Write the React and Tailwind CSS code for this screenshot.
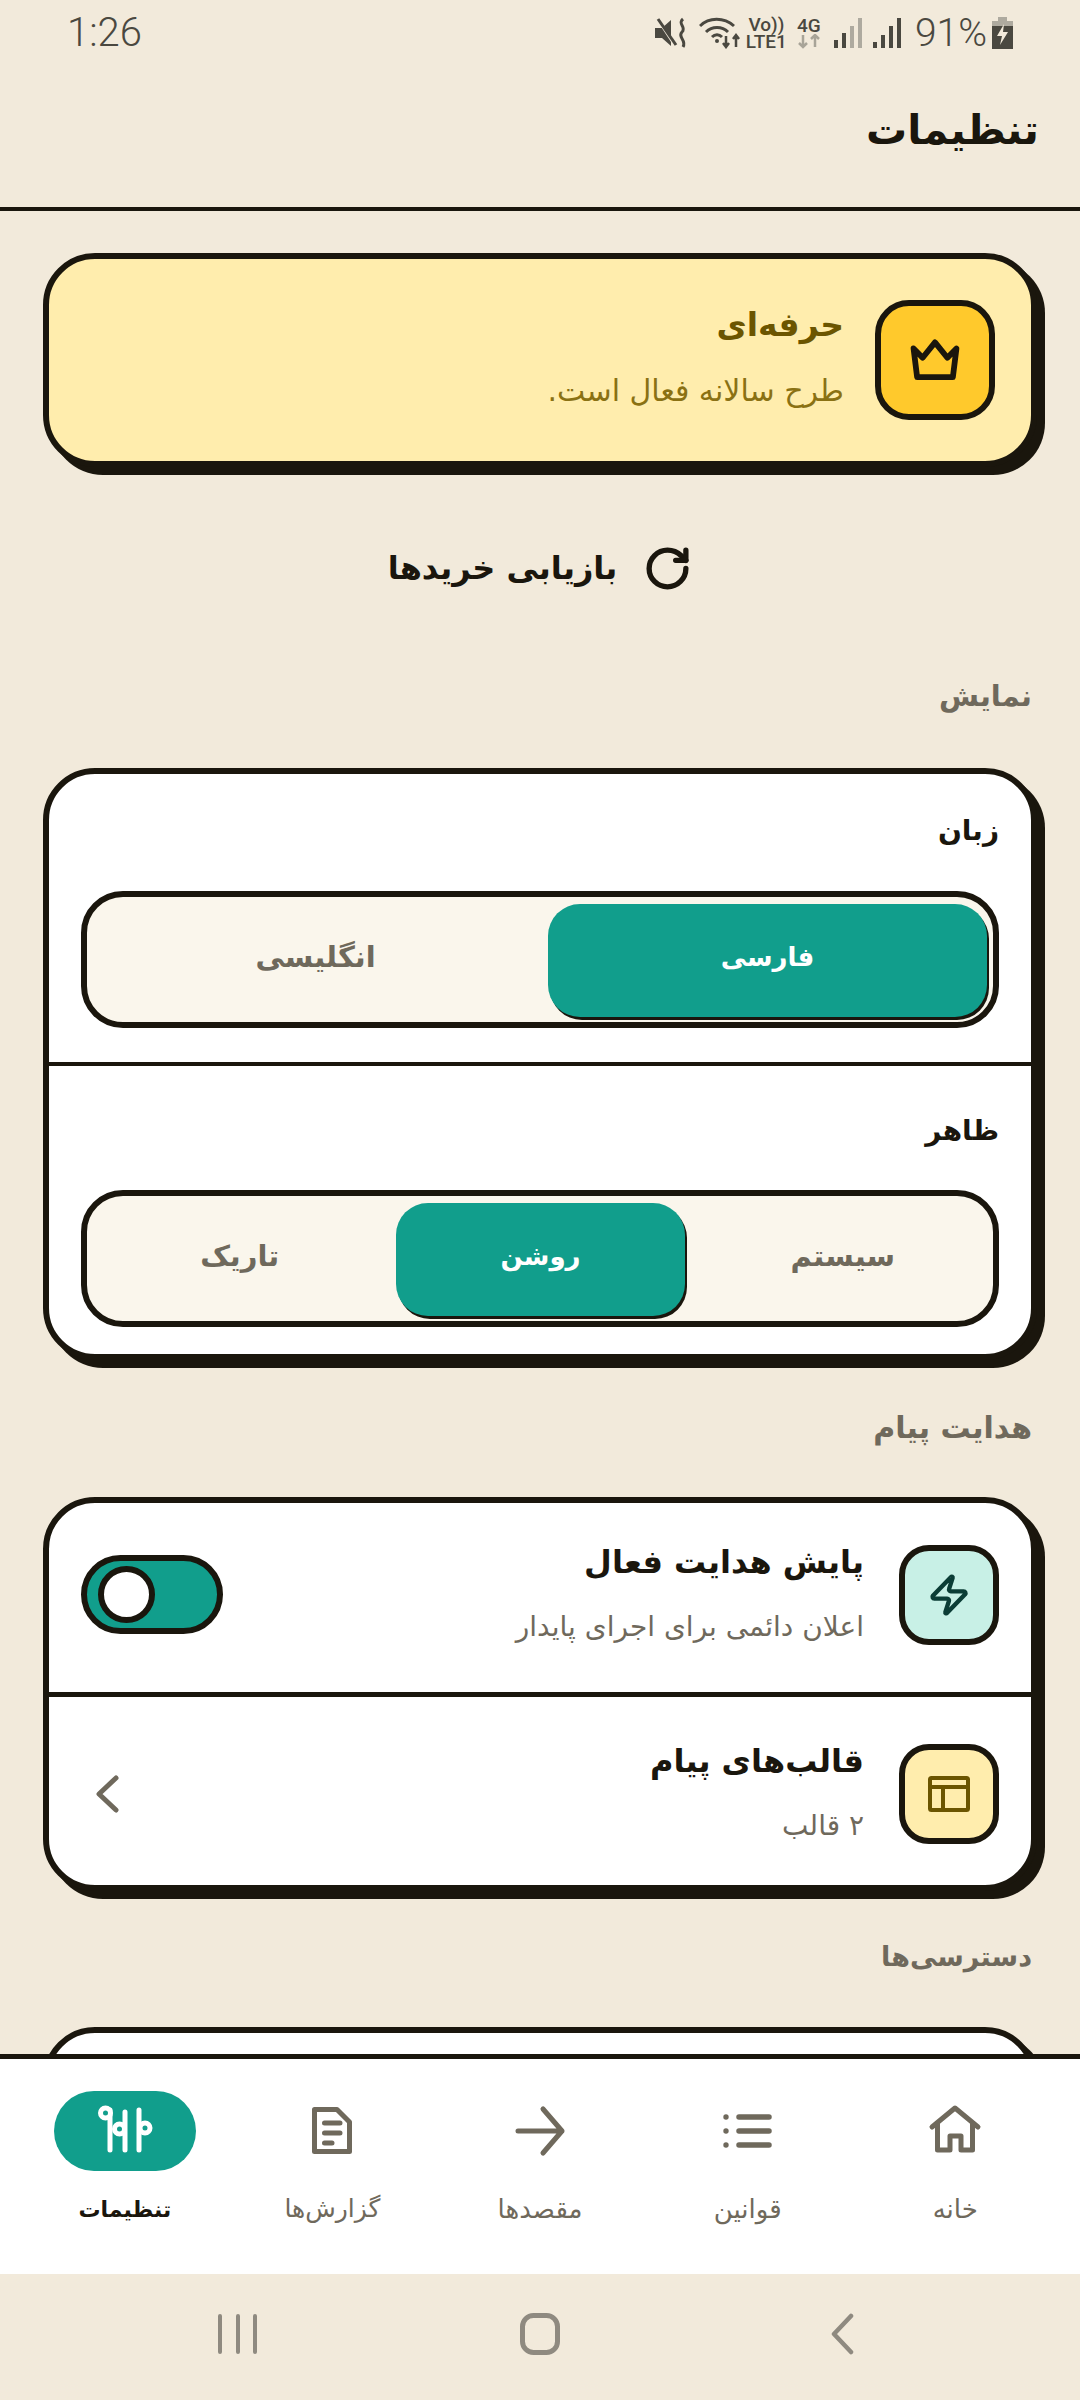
import React from 'react';
import { RotateCw, Zap } from 'lucide-react';

const Crown = () => (
  <svg width="66" height="66" viewBox="0 0 24 24" fill="none" stroke="#1a160d" strokeWidth="2.1" strokeLinecap="round" strokeLinejoin="round">
    <path d="M4.2 7.8L7.5 11.2L12 5.6L16.5 11.2L19.8 7.8L18.5 18.2H5.5Z" />
  </svg>
);

const TemplateIcon = () => (
  <svg width="42" height="36" viewBox="0 0 42 36" fill="none" stroke="#6b5500" strokeWidth="4" strokeLinejoin="round">
    <rect x="2" y="2" width="38" height="32" rx="1.5" />
    <path d="M2 11H40M15 11V34" />
  </svg>
);

const HomeIcon = () => (
  <svg width="66" height="66" viewBox="0 0 66 66" fill="none" stroke="#6f695c" strokeWidth="5" strokeLinecap="round" strokeLinejoin="round">
    <path d="M10 29L33 10L56 29M15.5 26V52H28V38H39V52H50.5V26" />
  </svg>
);

const ListIcon = () => (
  <svg width="66" height="66" viewBox="0 0 66 66" fill="none" stroke="#6f695c" strokeWidth="5.5" strokeLinecap="round">
    <path d="M24 19H54M24 33H54M24 47H54" />
    <circle cx="11" cy="19" r="2.7" fill="#6f695c" stroke="none" />
    <circle cx="11" cy="33" r="2.7" fill="#6f695c" stroke="none" />
    <circle cx="11" cy="47" r="2.7" fill="#6f695c" stroke="none" />
  </svg>
);

const ArrowIcon = () => (
  <svg width="66" height="66" viewBox="0 0 66 66" fill="none" stroke="#6f695c" strokeWidth="5" strokeLinecap="round" strokeLinejoin="round">
    <path d="M11 33H55M36 11L55 33L36 55" />
  </svg>
);

const ReportIcon = () => (
  <svg width="66" height="66" viewBox="0 0 66 66" fill="none" stroke="#6f695c" strokeWidth="5" strokeLinecap="round" strokeLinejoin="round">
    <path d="M15.5 11.5H38L50.5 24V53.5H15.5Z" />
    <path d="M25.5 25H41M25.5 35H41M25.5 45H33" />
  </svg>
);

const SlidersIcon = () => (
  <svg width="66" height="66" viewBox="0 0 66 66" fill="none" stroke="#fff" strokeWidth="5" strokeLinecap="round">
    <path d="M18 12V52M33 14V52M47 12V52" />
    <circle cx="13.5" cy="15" r="5" fill="#119e8c" />
    <circle cx="27.5" cy="31" r="5" fill="#119e8c" />
    <circle cx="53" cy="30" r="5" fill="#119e8c" />
  </svg>
);

const StatusIcons = () => (
  <div dir="ltr" className="flex items-center text-[#4a4840] font-['Roboto',sans-serif]">
    {/* mute + vibrate */}
    <svg width="33" height="32" viewBox="0 0 33 32" className="mr-[11px]">
      <path d="M0 11H7L16 3V29L7 21H0Z" fill="#4a4840" />
      <path d="M2 1L21 30" stroke="#f2eadb" strokeWidth="3" />
      <path d="M3 2L21 28" stroke="#4a4840" strokeWidth="3" />
      <path d="M28 2C22 7 32 10 27 15C22 20 32 23 28 30" fill="none" stroke="#4a4840" strokeWidth="3" />
    </svg>
    {/* wifi */}
    <svg width="42" height="32" viewBox="0 0 42 32" fill="none" stroke="#4a4840" strokeWidth="3" className="mr-[5px]">
      <path d="M1 9C10 0 25 0 35 9M7 15C13 9 23 9 29 15M13 20C16 17 20 17 23 20" />
      <circle cx="18" cy="24" r="2" fill="#4a4840" stroke="none" />
      <path d="M27 19V30M24 26L27 30L30 26M37 30V18M34 22L37 18L40 22" strokeWidth="2.5" />
    </svg>
    <div className="flex flex-col items-center text-[19px] leading-[17px] font-medium mr-[10px]">
      <span>Vo))</span>
      <span>LTE1</span>
    </div>
    <div className="flex flex-col items-center mr-[13px]">
      <span className="text-[19px] leading-[17px] font-medium">4G</span>
      <svg width="24" height="15" viewBox="0 0 24 15" fill="none" stroke="#a8a498" strokeWidth="2.5">
        <path d="M6 1V13M2 9L6 13L10 9M18 13V1M14 5L18 1L22 5" />
      </svg>
    </div>
    <svg width="28" height="31" viewBox="0 0 28 31" className="mr-[11px]">
      <rect x="0" y="22" width="4" height="8" fill="#4a4840" />
      <rect x="8" y="15" width="4" height="15" fill="#4a4840" />
      <rect x="16" y="8" width="4" height="22" fill="#aeaa9f" />
      <rect x="24" y="0" width="4" height="30" fill="#aeaa9f" />
    </svg>
    <svg width="28" height="31" viewBox="0 0 28 31" className="mr-[14px]">
      <rect x="0" y="24" width="4" height="6" fill="#4a4840" />
      <rect x="8" y="17" width="4" height="13" fill="#4a4840" />
      <rect x="16" y="8" width="4" height="22" fill="#4a4840" />
      <rect x="24" y="0" width="4" height="30" fill="#4a4840" />
    </svg>
    <span className="text-[39px] leading-none font-light mr-[5px]">91%</span>
    <svg width="21" height="32" viewBox="0 0 21 32">
      <rect x="6" y="0" width="9" height="4" fill="#aeaa9f" />
      <rect x="0" y="4" width="21" height="5" fill="#aeaa9f" />
      <rect x="0" y="9" width="21" height="23" fill="#4a4840" />
      <path d="M12 7L5 19H10L8 28L16 15H11Z" fill="#f2eadb" />
    </svg>
  </div>
);

const Card = ({ children, className = '' }) => (
  <div className={`bg-white border-[6px] border-[#1a160d] rounded-[52px] shadow-[8px_8px_0_#1a160d] ${className}`}>
    {children}
  </div>
);

const SectionLabel = ({ children, className = '' }) => (
  <div className={`h-[40px] flex items-center pr-[5px] pb-[6px] font-bold text-[#6f695c] ${className}`}>{children}</div>
);

const Segment = ({ className = '', options }) => (
  <div className={`h-[137px] border-[6px] border-[#1a160d] rounded-[42px] bg-[#faf6ec] flex pr-[6px] pl-[6px] pt-[7px] pb-[5px] ${className}`}>
    {options.map((o) => (
      <div
        key={o.label}
        style={{ width: o.width }}
        className={`flex items-center justify-center pb-[6px] font-bold ${o.className || ''} ${
          o.active
            ? 'text-[26px] bg-[#119e8c] text-white rounded-[32px] shadow-[2px_3px_0_#1a160d]'
            : 'text-[29px] text-[#6f695c]'
        }`}
      >
        {o.label}
      </div>
    ))}
  </div>
);

const Row = ({ tileBg, icon, title, sub, trailing, className = '' }) => (
  <div className={`flex items-center px-[32px] ${className}`}>
    <div className={`w-[100px] h-[100px] shrink-0 rounded-[30px] border-[6px] border-[#1a160d] flex items-center justify-center ${tileBg}`}>
      {icon}
    </div>
    <div className="mr-[35px] flex-1 pb-[3px]">
      <div className="h-[44px] flex items-center text-[32px] font-bold text-[#1a160d]">{title}</div>
      <div className="h-[40px] mt-[23px] flex items-center text-[28px] text-[#6f695c]">{sub}</div>
    </div>
    {trailing}
  </div>
);

const Toggle = () => (
  <div dir="ltr" className="w-[142px] h-[79px] rounded-full border-[6px] border-[#1a160d] bg-[#119e8c] flex items-center pl-[11px]">
    <div className="w-[57px] h-[57px] rounded-full border-[6px] border-[#1a160d] bg-white" />
  </div>
);

const NavItem = ({ icon, label, active, textSize = 'text-[26px]' }) => (
  <div className="flex-1 flex flex-col items-center">
    <div className={`h-[80px] w-[142px] rounded-full flex items-center justify-center ${active ? 'bg-[#119e8c]' : ''}`}>
      {icon}
    </div>
    <div className={`h-[36px] mt-[20px] flex items-center ${textSize} ${active ? 'font-bold text-[#1a160d]' : 'text-[#6f695c]'}`}>
      {label}
    </div>
  </div>
);

export default function App() {
  return (
    <div dir="rtl" className="w-[1080px] h-[2400px] overflow-hidden flex flex-col bg-[#f2eadb] font-['DejaVu_Sans',sans-serif]">
      {/* status bar */}
      <div dir="ltr" className="h-[66px] shrink-0 flex items-center justify-between pl-[67px] pr-[67px] text-[#4a4840]">
        <span className="text-[40px] font-light font-['Roboto',sans-serif]">1:26</span>
        <StatusIcons />
      </div>

      {/* title */}
      <div className="h-[145px] shrink-0 border-b-[4px] border-[#1a160d] flex items-center pr-[41px] pb-[12px]">
        <h1 className="text-[41px] font-bold text-[#1a160d]">تنظیمات</h1>
      </div>

      <main className="flex-1 min-h-0 overflow-hidden px-[43px] pt-[42px]">
        {/* plan card */}
        <div className="h-[214px] bg-[#ffedad] border-[6px] border-[#1a160d] rounded-[52px] shadow-[8px_8px_0_#1a160d] flex items-center pr-[36px]">
          <div className="w-[120px] h-[120px] rounded-[34px] border-[6px] border-[#1a160d] bg-[#ffc92c] flex items-center justify-center">
            <Crown />
          </div>
          <div className="mr-[31px] pb-[7px]">
            <div className="h-[44px] flex items-center text-[33px] font-bold text-[#6b5500]">حرفه‌ای</div>
            <div className="h-[40px] mt-[23px] flex items-center text-[30px] text-[#8a7113]">طرح سالانه فعال است.</div>
          </div>
        </div>

        {/* restore */}
        <div className="h-[64px] mt-[69px] flex items-center justify-center gap-[26px]">
          <RotateCw size={49} strokeWidth={2.6} color="#1a160d" />
          <span className="text-[32px] font-bold text-[#1a160d]">بازیابی خریدها</span>
        </div>

        <SectionLabel className="text-[29px] mt-[80px] mb-[48px]">نمایش</SectionLabel>

        <Card>
          <div className="px-[32px] pt-[37px] pb-[34px]">
            <div className="h-[40px] flex items-center text-[28px] font-bold text-[#1a160d]">زبان</div>
            <Segment
              className="mt-[40px]"
              options={[
                { label: 'فارسی', width: 440, active: true },
                { label: 'انگلیسی', width: 456, className: 'pr-[10px]' },
              ]}
            />
          </div>
          <div className="h-[4px] bg-[#1a160d]" />
          <div className="px-[32px] pt-[45px] pb-[27px]">
            <div className="h-[40px] flex items-center text-[28px] font-bold text-[#1a160d]">ظاهر</div>
            <Segment
              className="mt-[39px]"
              options={[
                { label: 'سیستم', width: 303, className: 'pl-[14px]' },
                { label: 'روشن', width: 289, active: true },
                { label: 'تاریک', width: 304, className: 'pr-[10px]' },
              ]}
            />
          </div>
        </Card>

        <SectionLabel className="text-[30px] mt-[50px] mb-[47px]">هدایت پیام</SectionLabel>

        <Card>
          <Row
            className="h-[189px] pb-[6px]"
            tileBg="bg-[#c8f0e6]"
            icon={<Zap size={44} strokeWidth={2.4} color="#0b3d36" />}
            title="پایش هدایت فعال"
            sub="اعلان دائمی برای اجرای پایدار"
            trailing={<Toggle />}
          />
          <div className="h-[5px] bg-[#1a160d]" />
          <Row
            className="h-[188px] pt-[6px]"
            tileBg="bg-[#ffedad]"
            icon={<TemplateIcon />}
            title="قالب‌های پیام"
            sub="۲ قالب"
            trailing={
              <svg width="24" height="38" viewBox="0 0 24 38" fill="none" stroke="#6f695c" strokeWidth="5" strokeLinecap="round" strokeLinejoin="round" className="ml-[14px]">
                <path d="M21 3L4 19L21 35" />
              </svg>
            }
          />
        </Card>

        <SectionLabel className="text-[27px] mt-[49px] mb-[47px]">دسترسی‌ها</SectionLabel>

        <Card className="h-[200px]" />
      </main>

      {/* bottom nav */}
      <nav className="h-[220px] shrink-0 bg-white border-t-[5px] border-[#1a160d] flex px-[21px] pt-[32px]">
        <NavItem icon={<HomeIcon />} label="خانه" />
        <NavItem icon={<ListIcon />} label="قوانین" />
        <NavItem icon={<ArrowIcon />} label="مقصدها" />
        <NavItem icon={<ReportIcon />} label="گزارش‌ها" textSize="text-[25px]" />
        <NavItem icon={<SlidersIcon />} label="تنظیمات" active textSize="text-[22px]" />
      </nav>

      {/* system nav */}
      <div dir="ltr" className="h-[126px] shrink-0 flex items-center pl-[218px] pb-[6px]">
        <svg width="40" height="40" viewBox="0 0 40 40" fill="none" stroke="#8f8a80" strokeWidth="4" strokeLinecap="round">
          <path d="M2 2V38M20 2V38M37 2V38" />
        </svg>
        <svg width="40" height="42" viewBox="0 0 40 42" fill="none" stroke="#8f8a80" strokeWidth="5" className="ml-[262px]">
          <rect x="2.5" y="2.5" width="35" height="37" rx="11" />
        </svg>
        <svg width="24" height="42" viewBox="0 0 24 42" fill="none" stroke="#8f8a80" strokeWidth="4.5" strokeLinecap="round" strokeLinejoin="round" className="ml-[270px]">
          <path d="M21 3L4 21L21 39" />
        </svg>
      </div>
    </div>
  );
}
